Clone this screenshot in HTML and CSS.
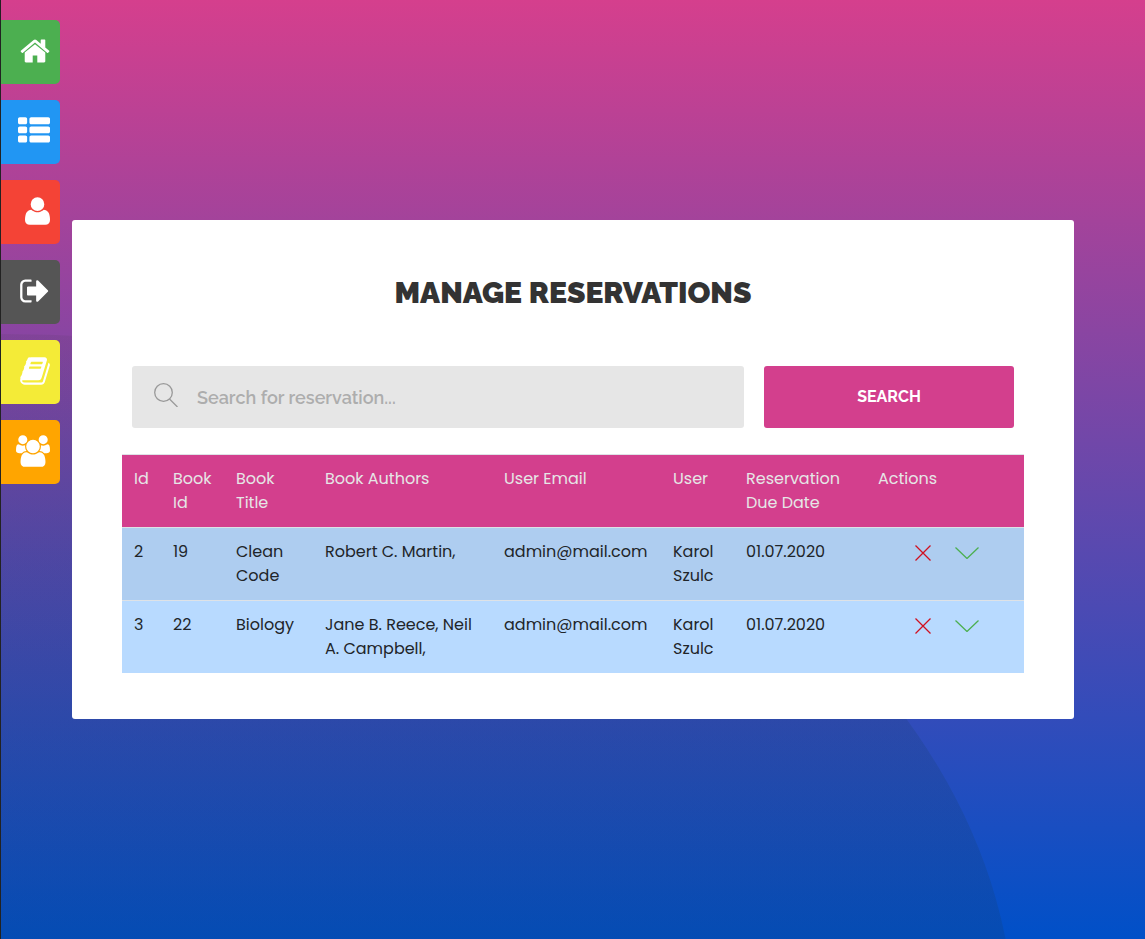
FILE: index.html
```html
<!DOCTYPE html>
<html lang="en">
<head>
<meta charset="utf-8">
<title>Manage Reservations</title>
<link rel="stylesheet" href="styles.css">
</head>
<body>
<nav class="side" aria-label="Main">
  <a class="tab home" href="#" aria-label="Home"><svg width="30" height="32" viewBox="64 0 1664 1792"><path d="M1472 992v480q0 26-19 45t-45 19h-384v-384H768v384H384q-26 0-45-19t-19-45V992q0-1 .5-3t.5-3l575-474 575 474q1 2 1 6zm223-69l-62 74q-8 9-21 11h-3q-13 0-21-7L896 424l-692 577q-12 8-24 7-13-2-21-11l-62-74q-8-10-7-23.500t11-21.500l719-599q32-26 76-26t76 26l244 204V288q0-14 9-23t23-9h192q14 0 23 9t9 23v408l219 182q10 8 11 21.500t-7 23.500z"/></svg></a>
  <a class="tab list" href="#" aria-label="List"><svg width="32" height="32" viewBox="0 0 1792 1792"><path d="M512 1248v192q0 40-28 68t-68 28H96q-40 0-68-28t-28-68v-192q0-40 28-68t68-28h320q40 0 68 28t28 68zm0-512v192q0 40-28 68t-68 28H96q-40 0-68-28t-28-68V736q0-40 28-68t68-28h320q40 0 68 28t28 68zm1280 512v192q0 40-28 68t-68 28H736q-40 0-68-28t-28-68v-192q0-40 28-68t68-28h960q40 0 68 28t28 68zM512 224v192q0 40-28 68t-68 28H96q-40 0-68-28T0 416V224q0-40 28-68t68-28h320q40 0 68 28t28 68zm1280 512v192q0 40-28 68t-68 28H736q-40 0-68-28t-28-68V736q0-40 28-68t68-28h960q40 0 68 28t28 68zm0-512v192q0 40-28 68t-68 28H736q-40 0-68-28t-28-68V224q0-40 28-68t68-28h960q40 0 68 28t28 68z"/></svg></a>
  <a class="tab user" href="#" aria-label="Account"><svg width="25" height="32" viewBox="192 0 1408 1792"><path d="M1600 1405q0 120-73 189.500t-194 69.500H459q-121 0-194-69.500T192 1405q0-53 3.500-103.500t14-109T236 1084t43-97.500 62-81 85.500-53.500T538 832q9 0 42 21.500t74.500 48 108 48T896 971t133.500-21.500 108-48 74.500-48 42-21.500q61 0 111.500 20t85.500 53.500 62 81 43 97.500 26.500 108.500 14 109 3.500 103.500zm-320-893q0 159-112.500 271.500T896 896 624.500 783.500 512 512t112.500-271.500T896 128t271.500 112.500T1280 512z"/></svg></a>
  <a class="tab logout" href="#" aria-label="Log out"><svg width="30" height="32" viewBox="64 0 1664 1792"><path d="M704 1440q0 4 1 20t.5 26.500-3 23.500-10 19.500-20.500 6.500H352q-119 0-203.500-84.500T64 1248V544q0-119 84.500-203.500T352 256h320q13 0 22.500 9.500T704 288q0 4 1 20t.5 26.500-3 23.500-10 19.500T672 384H352q-66 0-113 47t-47 113v704q0 66 47 113t113 47h312q6 0 18 1t15.500 4 8 10 5.500 21zm928-544q0 26-19 45l-544 544q-19 19-45 19t-45-19-19-45v-288H512q-26 0-45-19t-19-45V704q0-26 19-45t45-19h448V352q0-26 19-45t45-19 45 19l544 544q19 19 19 45z"/></svg></a>
  <a class="tab books" href="#" aria-label="Books"><svg width="30" height="32" viewBox="64 0 1664 1792"><path d="M1703 478q40 57 18 129l-275 906q-19 64-76.500 107.500T1247 1664H324q-77 0-148.500-53.500T76 1479q-24-67-2-127 0-4 3-27t4-37q1-8-3-21.500t-3-19.500q2-11 8-21t16.500-23.500T116 1179q23-38 45-91.500t30-91.500q3-10 .5-30t-.5-28q3-11 17-28t17-23q21-36 42-92t25-90q1-9-2.500-32t.5-28q4-13 22-30.500t22-22.500q19-26 42.500-84.500T404 411q1-8-3-25.500t-2-26.500q2-8 9-18t18-23 17-21q8-12 16.500-30.500t15-35 16-36 19.500-32T533.500 140t36-11.500T617 134l-1 3q38-9 51-9h761q74 0 114 56t18 130l-274 906q-36 119-71.500 153.500T1086 1408H217q-27 0-38 15-11 16-1 43 24 70 144 70h923q29 0 56-15.500t35-41.500l300-987q7-22 5-57 38 15 59 43zm-1064 2q-4 13 2 22.500t20 9.500h608q13 0 25.500-9.500T1311 480l21-64q4-13-2-22.500t-20-9.500H702q-13 0-25.500 9.500T660 416zm-83 256q-4 13 2 22.500t20 9.500h608q13 0 25.500-9.500T1228 736l21-64q4-13-2-22.500t-20-9.500H619q-13 0-25.500 9.500T577 672z"/></svg></a>
  <a class="tab members" href="#" aria-label="Users"><svg width="34" height="32" viewBox="0 0 1920 1792"><path d="M593 896q-162 5-265 128H194q-82 0-138-40.500T0 865q0-353 124-353 6 0 43.500 21t97.500 42.500T384 597q67 0 133-23-5 37-5 66 0 139 81 256zm1071 637q0 120-73 189.500t-194 69.500H523q-121 0-194-69.500T256 1533q0-53 3.500-103.500t14-109T300 1212t43-97.500 62-81 85.500-53.500T602 960q10 0 43 21.500t73 48 107 48 135 21.500 135-21.500 107-48 73-48 43-21.500q61 0 111.500 20t85.500 53.500 62 81 43 97.500 26.500 108.500 14 109 3.500 103.500zM640 256q0 106-75 181t-181 75-181-75-75-181 75-181T384 0t181 75 75 181zm704 384q0 159-112.500 271.500T960 1024 688.500 911.500 576 640t112.500-271.500T960 256t271.500 112.500T1344 640zm576 225q0 78-56 118.500t-138 40.500h-134q-103-123-265-128 81-117 81-256 0-29-5-66 66 23 133 23 59 0 119-21.500t97.500-42.500 43.500-21q124 0 124 353zm-128-609q0 106-75 181t-181 75-181-75-75-181 75-181 181-75 181 75 75 181z"/></svg></a>
</nav>
<main class="page">
  <section class="card">
    <h1 class="title">Manage Reservations</h1>
    <form class="search">
      <label class="field">
        <svg class="glass" width="24" height="24" viewBox="0 0 24 24"><circle cx="9.500" cy="9.500" r="8.800"/><path d="M15.500 16L23.500 24"/></svg>
        <input class="input" type="text" placeholder="Search for reservation..." aria-label="Search for reservation">
      </label>
      <button class="button" type="submit">Search</button>
    </form>
    <table class="table">
      <colgroup><col class="c1"><col class="c2"><col class="c3"><col class="c4"><col class="c5"><col class="c6"><col class="c7"><col class="c8"></colgroup>
      <thead>
        <tr><th>Id</th><th>Book Id</th><th>Book Title</th><th>Book Authors</th><th>User Email</th><th>User</th><th>Reservation Due Date</th><th>Actions</th></tr>
      </thead>
      <tbody>
        <tr><td>2</td><td>19</td><td>Clean Code</td><td>Robert C. Martin,</td><td>admin@mail.com</td><td>Karol Szulc</td><td>01.07.2020</td>
          <td><div class="actions"><button class="act no" aria-label="Cancel"><svg width="16" height="16" viewBox="0 0 16 16"><path d="M.5.5l15 15M15.500.5l-15 15"/></svg></button><button class="act yes" aria-label="Accept"><svg width="24" height="12" viewBox="0 0 24 12"><path d="M.5.5L12 11.500 23.500.5"/></svg></button></div></td></tr>
        <tr><td>3</td><td>22</td><td>Biology</td><td>Jane B. Reece, Neil A. Campbell,</td><td>admin@mail.com</td><td>Karol Szulc</td><td>01.07.2020</td>
          <td><div class="actions"><button class="act no" aria-label="Cancel"><svg width="16" height="16" viewBox="0 0 16 16"><path d="M.5.5l15 15M15.500.5l-15 15"/></svg></button><button class="act yes" aria-label="Accept"><svg width="24" height="12" viewBox="0 0 24 12"><path d="M.5.5L12 11.500 23.500.5"/></svg></button></div></td></tr>
      </tbody>
    </table>
  </section>
</main>
</body>
</html>
```
FILE: styles.css
```css
* { box-sizing: border-box; }
body {
  margin: 0;
  font-family: Poppins, "Open Sans", sans-serif;
  font-size: 16px;
  line-height: 24px;
  color: #212529;
}
.page {
  position: relative;
  z-index: 0;
  overflow: hidden;
  min-height: 100vh;
  display: flex;
  align-items: center;
  padding: 20px 71px;
  border-left: 1px solid #222;
  background: linear-gradient(#d53f8d, #0050c8);
}
.page::before {
  content: "";
  position: absolute;
  z-index: -1;
  width: 2030px;
  height: 1400px;
  border-radius: 50%;
  left: -1016px;
  top: 334px;
  background: linear-gradient(rgba(51, 51, 51, .09), rgba(22, 60, 100, .2) 400px);
}
.side {
  position: fixed;
  z-index: 1;
  left: 1px;
  top: 20px;
  display: flex;
  flex-direction: column;
  gap: 16px;
}
.tab {
  display: flex;
  justify-content: flex-end;
  align-items: center;
  width: 59px;
  height: 64px;
  padding: 0 10px 3px 0;
  border-radius: 0 5px 5px 0;
  fill: #fff;
}
.home { background: #4caf50; }
.list { background: #2196f3; }
.user { background: #f44336; }
.logout { background: #555; }
.books { background: #f4eb37; }
.members { background: #ffa500; }
.card {
  width: 100%;
  padding: 50px 50px 46px;
  border-radius: 3px;
  background: #fff;
}
.title {
  margin: 0 0 50px;
  font: 900 30px/46px Raleway, Lato, sans-serif;
  text-align: center;
  text-transform: uppercase;
  color: #333;
}
.search {
  display: flex;
  gap: 20px;
  padding: 0 10px;
  margin-bottom: 26px;
}
.field {
  flex: 1;
  display: flex;
  align-items: center;
  height: 62px;
  padding: 0 22px;
  gap: 19px;
  border-radius: 3px;
  background: #e6e6e6;
}
.glass { fill: none; stroke: #999; stroke-width: 1.3; margin-bottom: 4px; }
.input {
  flex: 1;
  border: 0;
  outline: 0;
  padding: 2px 0 0;
  background: transparent;
  font: 600 18px/24px Raleway, "Open Sans", sans-serif;
  color: #333;
}
.input::placeholder { color: #adadad; opacity: 1; }
.button {
  width: 250px;
  border: 0;
  border-radius: 3px;
  background: #d33f8d;
  color: #fff;
  font: 700 16px/24px Raleway, "Open Sans", sans-serif;
  text-transform: uppercase;
}
.table {
  width: 100%;
  table-layout: fixed;
  border-collapse: collapse;
}
.c1 { width: 39px; }
.c2 { width: 63px; }
.c3 { width: 89px; }
.c4 { width: 179px; }
.c5 { width: 169px; }
.c6 { width: 73px; }
.c7 { width: 132px; }
th, td {
  padding: 12px;
  border-top: 1px solid #dee2e6;
  vertical-align: top;
  text-align: left;
  font-weight: 400;
}
th { background: #d33f8d; color: #e6e6e6; }
td { background: #b8daff; }
tbody tr:first-child td { background: #aecdf0; }
.actions {
  display: flex;
  align-items: center;
  gap: 24px;
  height: 26px;
  padding-left: 37px;
}
.act {
  display: flex;
  padding: 0;
  border: 0;
  background: none;
  fill: none;
  stroke-width: 1.3;
}
.no { stroke: #d01020; }
.yes { stroke: #4caf50; }
```
